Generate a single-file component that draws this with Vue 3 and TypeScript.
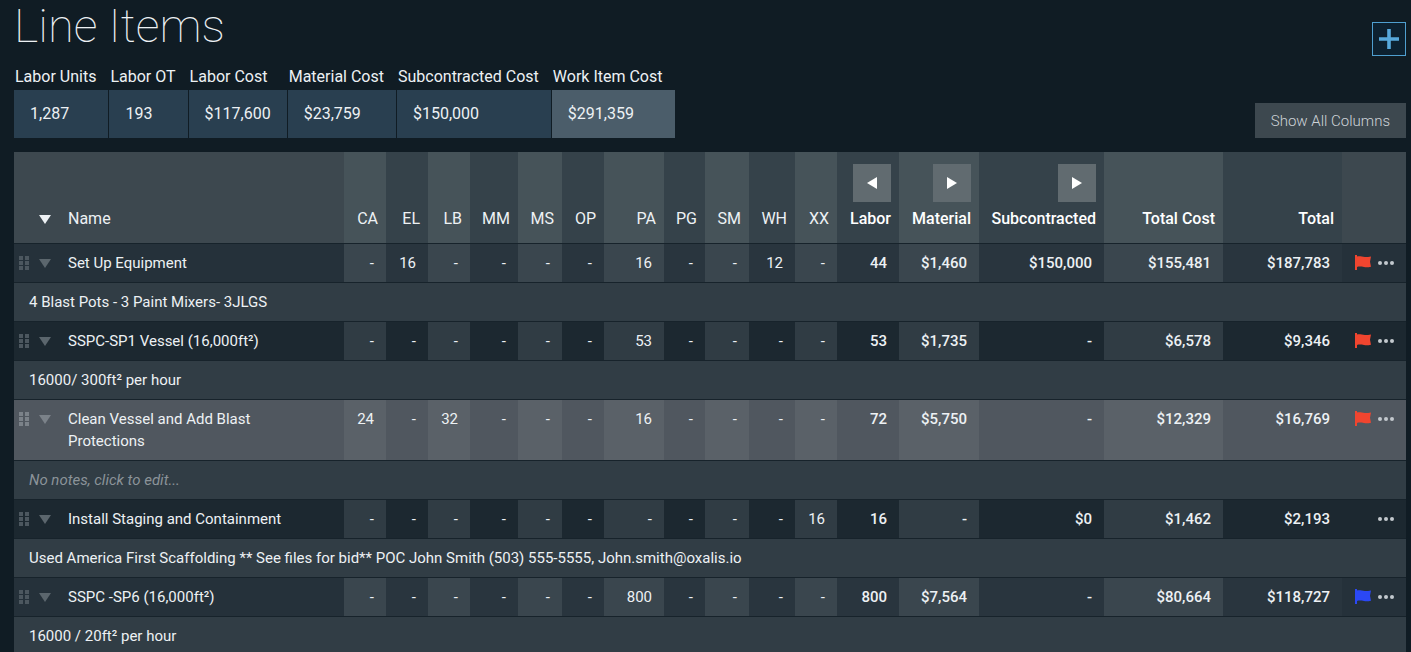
<script setup lang="ts">
interface Stat {
  label: string
  value: string
  total?: boolean
}

interface LineItem {
  id: number
  name: string
  units: string[]
  sums: string[]
  flag: string
  note: string
  tone: string
}

const stats: Stat[] = [
  { label: 'Labor Units', value: '1,287' },
  { label: 'Labor OT', value: '193' },
  { label: 'Labor Cost', value: '$117,600' },
  { label: 'Material Cost', value: '$23,759' },
  { label: 'Subcontracted Cost', value: '$150,000' },
  { label: 'Work Item Cost', value: '$291,359', total: true },
]

const crafts: string[] = ['CA', 'EL', 'LB', 'MM', 'MS', 'OP', 'PA', 'PG', 'SM', 'WH', 'XX']

const groups: { label: string; arrow: string }[] = [
  { label: 'Labor', arrow: 'left' },
  { label: 'Material', arrow: 'right' },
  { label: 'Subcontracted', arrow: 'right' },
  { label: 'Total Cost', arrow: '' },
  { label: 'Total', arrow: '' },
]

const units = (filled: Record<string, string>): string[] => crafts.map((c) => filled[c] ?? '-')

const items: LineItem[] = [
  {
    id: 1,
    name: 'Set Up Equipment',
    units: units({ EL: '16', PA: '16', WH: '12' }),
    sums: ['44', '$1,460', '$150,000', '$155,481', '$187,783'],
    flag: 'red',
    note: '4 Blast Pots - 3 Paint Mixers- 3JLGS',
    tone: 'plain',
  },
  {
    id: 2,
    name: 'SSPC-SP1 Vessel (16,000ft²)',
    units: units({ PA: '53' }),
    sums: ['53', '$1,735', '-', '$6,578', '$9,346'],
    flag: 'red',
    note: '16000/ 300ft² per hour',
    tone: 'dark',
  },
  {
    id: 3,
    name: 'Clean Vessel and Add Blast Protections',
    units: units({ CA: '24', LB: '32', PA: '16' }),
    sums: ['72', '$5,750', '-', '$12,329', '$16,769'],
    flag: 'red',
    note: '',
    tone: 'active',
  },
  {
    id: 4,
    name: 'Install Staging and Containment',
    units: units({ XX: '16' }),
    sums: ['16', '-', '$0', '$1,462', '$2,193'],
    flag: '',
    note: 'Used America First Scaffolding ** See files for bid** POC John Smith (503) 555-5555, John.smith@oxalis.io',
    tone: 'dark',
  },
  {
    id: 5,
    name: 'SSPC -SP6 (16,000ft²)',
    units: units({ PA: '800' }),
    sums: ['800', '$7,564', '-', '$80,664', '$118,727'],
    flag: 'blue',
    note: '16000 / 20ft² per hour',
    tone: 'plain',
  },
]
</script>

<template>
  <main class="page">
    <header class="top">
      <div>
        <h1>Line Items</h1>
        <dl class="stats">
          <div v-for="s in stats" :key="s.label" class="stat" :class="{ total: s.total }">
            <dt>{{ s.label }}</dt>
            <dd>{{ s.value }}</dd>
          </div>
        </dl>
      </div>
      <div class="actions">
        <button class="add" type="button" aria-label="Add line item">
          <svg width="20" height="20" viewBox="0 0 20 20"><path d="M10 0v20M0 10h20" stroke="currentColor" stroke-width="3.6" /></svg>
        </button>
        <button class="columns" type="button">Show All Columns</button>
      </div>
    </header>

    <table>
      <colgroup>
        <col />
        <col v-for="c in crafts" :key="c" :class="'w-' + c.toLowerCase()" />
        <col class="w-labor" />
        <col class="w-material" />
        <col class="w-sub" />
        <col class="w-cost" />
        <col class="w-total" />
        <col class="w-menu" />
      </colgroup>
      <thead>
        <tr>
          <th class="name" scope="col">
            <div class="name-box">
              <button class="toggle" type="button" aria-label="Collapse all">
                <svg width="12" height="9" viewBox="0 0 12 9"><path d="M0 0h12L6 9z" fill="currentColor" /></svg>
              </button>
              <span>Name</span>
            </div>
          </th>
          <th v-for="c in crafts" :key="c" class="num" scope="col">{{ c }}</th>
          <th v-for="g in groups" :key="g.label" class="num strong" scope="col">
            <button v-if="g.arrow" class="arrow" type="button" :aria-label="'Toggle ' + g.label">
              <svg width="10" height="12" viewBox="0 0 10 12">
                <path :d="g.arrow === 'left' ? 'M10 0v12L0 6z' : 'M0 0v12l10-6z'" fill="currentColor" />
              </svg>
            </button>
            {{ g.label }}
          </th>
          <th class="menu"></th>
        </tr>
      </thead>
      <tbody v-for="item in items" :key="item.id">
        <tr :class="item.tone">
          <td class="name">
            <div class="name-box">
              <svg class="grip" width="10" height="14" viewBox="0 0 10 14">
                <path d="M0 0h4v4H0zM6 0h4v4H6zM0 5h4v4H0zM6 5h4v4H6zM0 10h4v4H0zM6 10h4v4H6z" fill="currentColor" />
              </svg>
              <button class="toggle" type="button" aria-label="Toggle notes">
                <svg width="12" height="9" viewBox="0 0 12 9"><path d="M0 0h12L6 9z" fill="currentColor" /></svg>
              </button>
              <span>{{ item.name }}</span>
            </div>
          </td>
          <td v-for="(u, i) in item.units" :key="i" class="num">{{ u }}</td>
          <td v-for="(s, i) in item.sums" :key="'s' + i" class="num strong">{{ s }}</td>
          <td class="menu">
            <div class="menu-box">
              <svg v-if="item.flag" :class="item.flag" width="16" height="16" viewBox="0 0 16 16">
                <path d="M0 0h2v1.500c3-.6 5 .5 8 .5 2 0 4-.3 6-.6l-1 5.300 1 5c-3 .8-5 .8-7 .4-3-.6-5-.6-7-.2V15H0z" fill="currentColor" />
              </svg>
              <button class="more" type="button" aria-label="More actions">
                <svg width="16" height="4" viewBox="0 0 16 4">
                  <circle cx="2" cy="2" r="2" fill="currentColor" />
                  <circle cx="8" cy="2" r="2" fill="currentColor" />
                  <circle cx="14" cy="2" r="2" fill="currentColor" />
                </svg>
              </button>
            </div>
          </td>
        </tr>
        <tr>
          <td class="note" :class="{ empty: !item.note }" colspan="18">{{ item.note || 'No notes, click to edit...' }}</td>
        </tr>
      </tbody>
    </table>
  </main>
</template>

<style>
body {
  background: #101c24;
}
html {
  overflow: hidden;
}
</style>

<style scoped>
.page {
  padding: 0 5px 0 14px;
  background: #101c24;
  color: #edf1f4;
  font-family: Roboto, "Liberation Sans", sans-serif;
  font-size: 16px;
  line-height: 22px;
}
button {
  display: flex;
  align-items: center;
  justify-content: center;
  margin: 0;
  padding: 0;
  border: 0;
  background: none;
  color: inherit;
  font: inherit;
  cursor: pointer;
}
svg {
  display: block;
}
.top {
  display: flex;
  justify-content: space-between;
  margin-bottom: 14px;
}
h1 {
  margin: 0 0 14px;
  font-size: 47px;
  font-weight: 100;
  line-height: 52px;
}
.stats {
  display: flex;
  margin: 0;
}
.stat {
  display: flex;
  flex-direction: column;
}
dt {
  padding: 0 13px 2px 1px;
}
dd {
  margin: 0 1px 0 0;
  padding: 13px 16px;
  background: #293f50;
}
.total dd {
  margin: 0;
  background: #4b5d6a;
}
.actions {
  display: flex;
  flex-direction: column;
  align-items: flex-end;
  justify-content: space-between;
  padding-top: 22px;
}
.add {
  width: 34px;
  height: 34px;
  border: 1px solid #4f9fd0;
  background: #0d2130;
  color: #58a9dc;
}
.columns {
  height: 35px;
  padding: 0 16px;
  background: #3d484f;
  color: #cdd3d8;
  font-size: 15px;
  font-weight: 300;
}
table {
  width: 100%;
  table-layout: fixed;
  border-collapse: separate;
  border-spacing: 0;
}
.w-ca, .w-el, .w-lb, .w-op, .w-xx { width: 42px; }
.w-mm { width: 48px; }
.w-ms, .w-sm { width: 44px; }
.w-pa { width: 60px; }
.w-pg { width: 41px; }
.w-wh { width: 46px; }
.w-labor { width: 62px; }
.w-material { width: 80px; }
.w-sub { width: 125px; }
.w-cost { width: 119px; }
.w-total { width: 119px; }
.w-menu { width: 64px; }
th {
  padding: 12px 8px 13px 0;
  border-bottom: 1px solid #17232b;
  background: #35424a;
  font-weight: 400;
  text-align: right;
  vertical-align: bottom;
}
th.name,
th.menu {
  background: #3d484f;
}
th.num:nth-child(even) {
  background: #465359;
}
.strong {
  font-weight: 500;
  white-space: nowrap;
}
th.strong {
  color: #fff;
}
.arrow {
  width: 38px;
  height: 38px;
  margin: 0 0 6px auto;
  background: #616b70;
  color: #fff;
}
td {
  padding: 8px 12px 8px 0;
  border-bottom: 1px solid #17232b;
  font-size: 15px;
  vertical-align: top;
}
td.num {
  text-align: right;
}
.name {
  padding-left: 5px;
  text-align: left;
}
td.name {
  padding-right: 24px;
}
.name-box {
  display: grid;
  grid-template-columns: 10px 12px 1fr;
  column-gap: 10px;
}
.name-box span {
  padding-left: 7px;
}
.toggle {
  grid-column: 2;
  height: 22px;
}
.grip {
  margin-top: 4px;
  color: #4c575f;
}
td .toggle {
  color: #5b666d;
}
.plain td { background: #25313a; }
.plain td.num { background: #29353e; }
.plain td.num:nth-child(even) { background: #3a464e; }
.dark td { background: #1c2830; }
.dark td.num:nth-child(even) { background: #303c44; }
.active td { background: #50575f; }
.active td.num:nth-child(even) { background: #5a6168; }
.active .grip,
.active .toggle { color: #7b8289; }
.menu-box {
  display: flex;
  align-items: center;
  justify-content: flex-end;
  gap: 7px;
  height: 22px;
}
.more {
  height: 22px;
  color: #c3c9ce;
}
.red { color: #f0452f; }
.blue { color: #2b48f5; }
td.note {
  padding-left: 15px;
  background: #313d45;
}
td.empty {
  color: #8b9399;
  font-style: italic;
}
</style>
